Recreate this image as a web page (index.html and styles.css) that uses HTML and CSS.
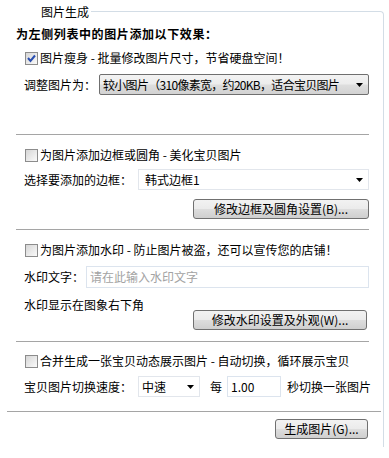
FILE: index.html
```html
<!DOCTYPE html>
<html lang="zh">
<head>
<meta charset="utf-8">
<link rel="stylesheet" href="styles.css">
</head>
<body>
<div class="panel">
  <div class="group">
    <div class="legend"><span>图片生成</span></div>
    <div class="intro">为左侧列表中的图片添加以下效果：</div>
    <div class="inner">
      <div class="check-row r1">
        <span class="cb checked"><svg width="11" height="11" viewBox="0 0 11 11"><path d="M2 5 L4.5 8 L9 2.5" fill="none" stroke="#2a4fb0" stroke-width="2"/></svg></span>
        <span>图片瘦身 - 批量修改图片尺寸，节省硬盘空间！</span>
      </div>
      <div class="field-row r-size">
        <span class="lbl w-size">调整图片为：</span>
        <div class="combo gray grow">
          <span class="combo-text tight">较小图片（310像素宽，约20KB，适合宝贝图片</span>
          <svg class="arrow" width="7" height="4" viewBox="0 0 7 4"><polygon points="0,0 7,0 3.5,4" fill="#000"/></svg>
        </div>
      </div>
      <div class="sep s1"></div>

      <div class="check-row r2">
        <span class="cb"></span>
        <span>为图片添加边框或圆角 - 美化宝贝图片</span>
      </div>
      <div class="field-row r-border">
        <span class="lbl w-border">选择要添加的边框：</span>
        <div class="combo white grow">
          <span class="combo-text pad7">韩式边框1</span>
          <svg class="arrow" width="7" height="4" viewBox="0 0 7 4"><polygon points="0,0 7,0 3.5,4" fill="#000"/></svg>
        </div>
      </div>
      <div class="btn-row r-btn1">
        <button class="btn w-btn1">修改边框及圆角设置(B)...</button>
      </div>
      <div class="sep s2"></div>

      <div class="check-row r3">
        <span class="cb"></span>
        <span>为图片添加水印 - 防止图片被盗，还可以宣传您的店铺！</span>
      </div>
      <div class="field-row r-wm">
        <span class="lbl w-wm">水印文字：</span>
        <div class="textbox grow"><span class="placeholder">请在此输入水印文字</span></div>
      </div>
      <div class="wm-pos-row">
        <span class="lbl wm-pos">水印显示在图象右下角</span>
        <button class="btn w-btn2">修改水印设置及外观(W)...</button>
      </div>
      <div class="sep s3"></div>

      <div class="check-row r4">
        <span class="cb"></span>
        <span>合并生成一张宝贝动态展示图片 - 自动切换，循环展示宝贝</span>
      </div>
      <div class="field-row r-speed">
        <span class="lbl w-border">宝贝图片切换速度：</span>
        <div class="combo white w-speed">
          <span class="combo-text pad4">中速</span>
          <svg class="arrow" width="7" height="4" viewBox="0 0 7 4"><polygon points="0,0 7,0 3.5,4" fill="#000"/></svg>
        </div>
        <span class="every">每</span>
        <div class="textbox w-sec"><span class="val">1.00</span></div>
        <span class="per">秒切换一张图片</span>
      </div>
    </div>
    <div class="sep-wide"></div>
    <div class="footer">
      <button class="btn w-btn3">生成图片(G)...</button>
    </div>
  </div>
</div>
</body>
</html>
```

FILE: styles.css
```css
html, body {
  margin: 0;
  padding: 0;
  background: #ffffff;
}
body {
  font-family: "Noto Sans CJK SC", "Liberation Sans", sans-serif;
  font-size: 12px;
  line-height: 16px;
  color: #000;
}
.panel {
  width: 389px;
  height: 458px;
  overflow: hidden;
}
.group {
  box-sizing: border-box;
  width: 384px;
  height: 436px;
  margin-top: 11px;
  border-top: 1px solid #d3dde6;
  border-right: 1px solid #d3dde6;
  border-top-right-radius: 4px;
}
.legend {
  display: flex;
  height: 14px;
  margin-top: -7px;
}
.legend span {
  display: inline-block;
  line-height: 14px;
  background: #fff;
  padding: 0 2px 0 41px;
}
.intro {
  margin-top: 7px;
  height: 16px;
  padding-left: 16px;
  font-weight: bold;
  letter-spacing: 0.6px;
  white-space: nowrap;
}
.inner {
  margin-left: 16px;
  width: 353px;
}
.check-row {
  display: flex;
  align-items: center;
  height: 16px;
  padding-left: 9px;
  white-space: nowrap;
}
.cb {
  box-sizing: border-box;
  width: 13px;
  height: 13px;
  border: 1px solid #8c8c8c;
  background: linear-gradient(135deg, #d6d6d6 0%, #ececec 60%, #fafafa 100%);
  margin-right: 2px;
  display: flex;
  align-items: center;
  justify-content: center;
  flex: none;
}
.cb svg { display: block; }
.r1 { margin-top: 8px; }
.r2 { margin-top: 12px; }
.r3 { margin-top: 12px; }
.r4 { margin-top: 11px; }

.field-row {
  display: flex;
  align-items: center;
  height: 21px;
  padding-left: 8px;
}
.r-size { margin-top: 8px; }
.r-border { margin-top: 6px; }
.r-wm { margin-top: 8px; height: 22px; }
.r-speed { margin-top: 7px; }

.lbl { flex: none; white-space: nowrap; }
.w-size { width: 75px; }
.w-border { width: 114px; }
.w-wm { width: 62px; }

.grow { flex: 1; min-width: 0; }

.combo {
  box-sizing: border-box;
  height: 21px;
  display: flex;
  align-items: center;
  overflow: hidden;
  white-space: nowrap;
}
.combo.gray {
  border: 1px solid #6f6f6f;
  border-radius: 2px;
  background: linear-gradient(#f3f3f3 0%, #ececec 48%, #dedede 52%, #d2d2d2 100%);
}
.combo.white {
  border: 1px solid #e2e6ec;
  background: #fff;
}
.combo-text {
  flex: 1;
  min-width: 0;
  padding-left: 3px;
  overflow: hidden;
}
.combo-text.tight { letter-spacing: -0.7px; }
.combo-text.pad7 { padding-left: 6px; }
.combo-text.pad4 { padding-left: 3px; }
.arrow {
  flex: none;
  margin: 0 5px 0 4px;
  display: block;
}
.w-speed { width: 62px; flex: none; }

.textbox {
  box-sizing: border-box;
  height: 22px;
  border: 1px solid #dce4ee;
  background: #fff;
  display: flex;
  align-items: center;
}
.placeholder {
  color: #a3a3a3;
  padding-left: 3px;
  white-space: nowrap;
}
.w-sec { width: 54px; height: 21px; margin-left: 5px; flex: none; }
.val { padding-left: 3px; }
.every { margin-left: 10px; }
.per { margin-left: 6px; white-space: nowrap; }

.btn {
  box-sizing: border-box;
  height: 20px;
  padding: 0;
  border: 1px solid #707070;
  border-radius: 3px;
  background: linear-gradient(#f2f2f2 0%, #ebebeb 48%, #dddddd 52%, #cfcfcf 100%);
  font-family: "Noto Sans CJK SC", "Liberation Sans", sans-serif;
  font-size: 12px;
  line-height: 16px;
  color: #000;
  text-align: center;
  white-space: nowrap;
}
.btn-row {
  display: flex;
  justify-content: flex-end;
}
.r-btn1 { margin-top: 9px; height: 20px; }
.w-btn1 { width: 176px; }

.wm-pos-row {
  margin-top: 9px;
  height: 33px;
  display: flex;
  justify-content: space-between;
  align-items: flex-start;
  padding-left: 8px;
}
.wm-pos { height: 16px; }
.w-btn2 { width: 174px; margin-top: 13px; margin-right: 2px; }

.sep {
  height: 1px;
  background: #a5a5a5;
}
.s1 { margin-top: 39px; }
.s2 { margin-top: 10px; }
.s3 { margin-top: 11px; }

.sep-wide {
  height: 1px;
  background: #a5a5a5;
  margin-top: 14px;
  margin-left: 7px;
  width: 374px;
}
.footer {
  display: flex;
  justify-content: flex-end;
  margin-top: 7px;
  padding-right: 15px;
}
.w-btn3 { width: 93px; }
```
